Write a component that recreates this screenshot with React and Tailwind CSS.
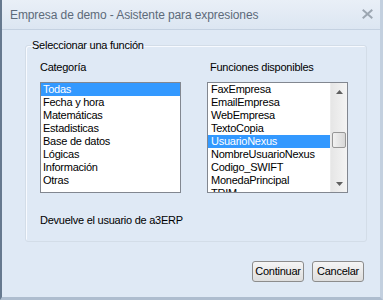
import React from 'react';

const categorias = ['Todas', 'Fecha y hora', 'Matemáticas', 'Estadisticas', 'Base de datos', 'Lógicas', 'Información', 'Otras'];
const funciones = ['FaxEmpresa', 'EmailEmpresa', 'WebEmpresa', 'TextoCopia', 'UsuarioNexus', 'NombreUsuarioNexus', 'Codigo_SWIFT', 'MonedaPrincipal', 'TRIM'];

function Row({ label, selected, pad }) {
    return (
        <div className={`h-[13px] leading-[13px] whitespace-nowrap ${pad} ${selected ? 'bg-[#3399ff] text-white' : 'text-black'}`}>
            {label}
        </div>
    );
}

export default function App() {
    return (
        <div className="w-[383px] h-[300px] flex flex-col bg-[#dfe9f5] border-l-2 border-l-[#66798f] border-r-[3px] border-r-[#c3d0df] border-b-[3px] border-b-[#aebdcf] font-['Liberation_Sans',Arial,sans-serif] text-[11px] tracking-[-0.25px] text-black">
            {/* Title bar */}
            <div className="h-[30px] shrink-0 flex items-center justify-between pl-[8px] pr-[7px] border-b border-[#c4d1e1] bg-gradient-to-b from-[#e9eff7] to-[#dce6f2]">
                <span className="text-[12px] tracking-[-0.1px] text-[#5d6a7a]">Empresa de demo - Asistente para expresiones</span>
                <svg width="11" height="10" viewBox="0 0 11 10" className="mt-[-1px]">
                    <path d="M1.5 1.5 L9.5 8.5 M9.5 1.5 L1.5 8.5" stroke="#9ca6b1" strokeWidth="2" strokeLinecap="square" />
                </svg>
            </div>

            {/* Group box */}
            <fieldset className="mt-[9px] ml-[23px] w-[342px] border border-[#d3dde8] rounded-[3px] pl-[5px] pb-[14px] shadow-[inset_1px_1px_0_#f7faff]">
                <legend className="px-[1px] leading-[13px]">Seleccionar una función</legend>
                <div className="pl-[9px] pt-[9px]">
                    <div className="grid grid-cols-[141px_141px] gap-x-[26px]">
                        <div className="leading-[13px] mb-[8px]">Categoría</div>
                        <div className="leading-[13px] mb-[8px] pl-[3px]">Funciones disponibles</div>

                        <div className="h-[111px] border border-[#828790] bg-white overflow-hidden">
                            {categorias.map((c, i) => (
                                <Row key={c} label={c} selected={i === 0} pad="px-[2px]" />
                            ))}
                        </div>

                        <div className="h-[111px] border border-[#828790] bg-white flex overflow-hidden">
                            <div className="flex-1 overflow-hidden">
                                {funciones.map((f) => (
                                    <Row key={f} label={f} selected={f === 'UsuarioNexus'} pad="px-[3px]" />
                                ))}
                            </div>
                            <div className="w-[17px] shrink-0 flex flex-col bg-gradient-to-r from-[#e6e6e6] to-[#f4f4f4] border-l border-[#ececec]">
                                <div className="h-[17px] flex items-center justify-center">
                                    <svg width="7" height="4" viewBox="0 0 7 4"><path d="M3.5 0 L7 4 L0 4 Z" fill="#606060" /></svg>
                                </div>
                                <div className="flex-1">
                                    <div className="mt-[32px] mx-[1px] h-[16px] border border-[#979797] rounded-[2px] bg-gradient-to-r from-[#f2f2f2] to-[#d8d8d8]" />
                                </div>
                                <div className="h-[17px] flex items-center justify-center">
                                    <svg width="7" height="4" viewBox="0 0 7 4"><path d="M0 0 L7 0 L3.5 4 Z" fill="#606060" /></svg>
                                </div>
                            </div>
                        </div>
                    </div>

                    <div className="mt-[21px] leading-[13px]">Devuelve el usuario de a3ERP</div>
                </div>
            </fieldset>

            {/* Buttons */}
            <div className="mt-[19px] flex justify-end gap-[8px] pr-[16px]">
                <button className="w-[52px] h-[21px] border border-[#8c8c8c] rounded-[3px] bg-gradient-to-b from-[#f5f5f5] to-[#dedede] leading-[19px]">Continuar</button>
                <button className="w-[52px] h-[21px] border border-[#8c8c8c] rounded-[3px] bg-gradient-to-b from-[#f5f5f5] to-[#dedede] leading-[19px]">Cancelar</button>
            </div>
        </div>
    );
}
